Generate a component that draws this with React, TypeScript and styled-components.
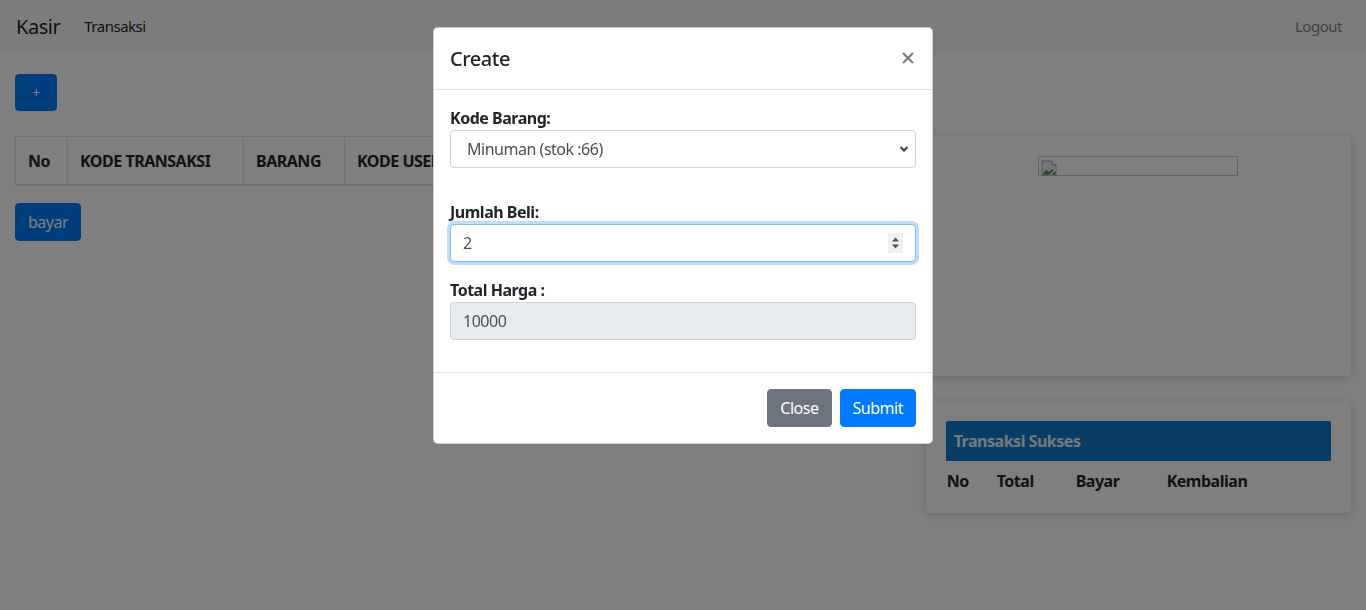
import React from 'react';
import styled, { createGlobalStyle } from 'styled-components';

const GlobalStyle = createGlobalStyle`
    * { box-sizing: border-box; }
    body {
        margin: 0;
        font-family: "Noto Sans", "Open Sans", sans-serif;
        font-size: 16px;
        line-height: 1.5;
        letter-spacing: -0.03em;
        color: #212529;
        background: #fff;
    }
    button, input, select { letter-spacing: inherit; }
`;

const Navbar = styled.nav`
    height: 53px;
    background: #f8f9fa;
    display: flex;
    align-items: center;
    padding: 0 16px;
`;

const Brand = styled.span`
    font-size: 20px;
    color: rgba(0, 0, 0, 0.9);
    margin-right: 16px;
`;

const NavLink = styled.a<{ $muted?: boolean }>`
    font-size: 15px;
    padding: 0 8px;
    text-decoration: none;
    color: ${p => (p.$muted ? 'rgba(0, 0, 0, 0.5)' : 'rgba(0, 0, 0, 0.9)')};
    margin-left: ${p => (p.$muted ? 'auto' : '0')};
`;

const Container = styled.main`
    padding: 21px 15px 0;
`;

const Button = styled.button<{ $variant?: 'primary' | 'secondary' }>`
    font-family: inherit;
    font-size: 16px;
    line-height: 24px;
    padding: 6px 12px;
    border: 1px solid transparent;
    border-radius: 4px;
    color: #fff;
    cursor: pointer;
    background: ${p => (p.$variant === 'secondary' ? '#6c757d' : '#007bff')};
    border-color: ${p => (p.$variant === 'secondary' ? '#6c757d' : '#007bff')};
`;

const AddButton = styled(Button)`
    width: 42px;
    height: 37px;
    font-size: 14px;
    padding: 0;
`;

const Row = styled.div`
    display: flex;
    margin: 25px -15px 0;
`;

const Col = styled.div<{ $size: number }>`
    flex: 0 0 ${p => (p.$size / 12) * 100}%;
    max-width: ${p => (p.$size / 12) * 100}%;
    padding: 0 15px;
`;

const Table = styled.table`
    width: 100%;
    border-collapse: collapse;
    margin-bottom: 17px;
`;

const Th = styled.th<{ $w?: number }>`
    width: ${p => (p.$w ? `${p.$w}px` : 'auto')};
    text-align: left;
    padding: 12px 12px 11px;
    border: 1px solid #dee2e6;
    border-bottom-width: 2px;
    white-space: nowrap;
    line-height: 24px;
`;

const Card = styled.div<{ $h?: number }>`
    background: #fff;
    border-radius: 5px;
    box-shadow: 0 2px 10px rgba(0, 0, 0, 0.18);
    padding: 20px;
    height: ${p => (p.$h ? `${p.$h}px` : 'auto')};
    margin-bottom: 25px;
`;

const ImageHolder = styled.div`
    display: flex;
    justify-content: center;
`;

const BrokenImage = styled.span`
    display: block;
    width: 200px;
    height: 20px;
    border: 1px solid #c8c8c8;
    padding: 1px 2px;
`;

const SuccessHead = styled.div`
    background: #0f7bcc;
    color: #eef2f6;
    font-weight: 700;
    padding: 8px 8px;
    border-radius: 2px 2px 0 0;
`;

const SuccessTable = styled.table`
    border-collapse: collapse;
    width: 100%;
`;

const SuccessTh = styled.th<{ $w?: number }>`
    width: ${p => (p.$w ? `${p.$w}px` : 'auto')};
    text-align: left;
    padding: 8px 1px 0;
    line-height: 24px;
`;

const Backdrop = styled.div`
    position: fixed;
    inset: 0;
    background: rgba(0, 0, 0, 0.5);
`;

const ModalWrap = styled.div`
    position: fixed;
    inset: 0;
    display: flex;
    justify-content: center;
    align-items: flex-start;
    padding-top: 27px;
`;

const Modal = styled.div`
    width: 500px;
    background: #fff;
    border: 1px solid rgba(0, 0, 0, 0.2);
    border-radius: 5px;
`;

const ModalHeader = styled.div`
    display: flex;
    align-items: center;
    justify-content: space-between;
    padding: 16px 16px 15px;
    border-bottom: 1px solid #dee2e6;
`;

const ModalTitle = styled.h5`
    margin: 0;
    font-size: 20px;
    font-weight: 500;
    line-height: 30px;
`;

const CloseX = styled.svg`
    opacity: 0.5;
    margin-right: 2px;
    margin-top: -2px;
`;

const ModalBody = styled.div`
    padding: 16px 16px 0;
`;

const Group = styled.div<{ $gap: number }>`
    margin-bottom: ${p => p.$gap}px;
`;

const Label = styled.label`
    display: block;
    font-weight: 700;
    line-height: 24px;
`;

const Field = styled.div`
    position: relative;
`;

const Control = styled.input<{ $focus?: boolean }>`
    display: block;
    width: 100%;
    height: 38px;
    padding: 6px 12px;
    font-family: inherit;
    font-size: 16px;
    color: #495057;
    background: #fff;
    border: 1px solid ${p => (p.$focus ? '#80bdff' : '#ced4da')};
    border-radius: 4px;
    box-shadow: ${p => (p.$focus ? '0 0 0 3px rgba(0, 123, 255, 0.25)' : 'none')};
    outline: none;
    caret-color: #212529;

    &:read-only:not([data-edit]) {
        background: #e9ecef;
    }
`;

const Select = styled.select`
    display: block;
    width: 100%;
    height: 38px;
    padding: 6px 12px 6px 16px;
    font-family: inherit;
    font-size: 16px;
    color: #495057;
    background: #fff;
    border: 1px solid #ced4da;
    border-radius: 4px;
    appearance: none;
    outline: none;
`;

const Chevron = styled.svg`
    position: absolute;
    right: 6px;
    top: 14px;
    pointer-events: none;
`;

const Spinner = styled.svg`
    position: absolute;
    right: 13px;
    top: 9px;
    pointer-events: none;
`;

const ModalFooter = styled.div`
    display: flex;
    justify-content: flex-end;
    gap: 8px;
    padding: 16px;
    border-top: 1px solid #dee2e6;
`;

export default function App() {
    return (
        <>
            <GlobalStyle />
            <Navbar>
                <Brand>Kasir</Brand>
                <NavLink href="#">Transaksi</NavLink>
                <NavLink href="#" $muted>Logout</NavLink>
            </Navbar>
            <Container>
                <AddButton>+</AddButton>
                <Row>
                    <Col $size={8}>
                        <Table>
                            <thead>
                                <tr>
                                    <Th $w={52}>No</Th>
                                    <Th $w={176}>KODE TRANSAKSI</Th>
                                    <Th $w={101}>BARANG</Th>
                                    <Th>KODE USER</Th>
                                    <Th>JUMLAH</Th>
                                    <Th>TOTAL HARGA</Th>
                                </tr>
                            </thead>
                        </Table>
                        <Button>bayar</Button>
                    </Col>
                    <Col $size={4}>
                        <Card $h={240}>
                            <ImageHolder>
                                <BrokenImage>
                                    <svg width="16" height="16" viewBox="0 0 16 16">
                                        <path d="M1 1h10l4 4v10H1z" fill="#e8eef4" stroke="#9aa4ae" />
                                        <path d="M11 1v4h4" fill="#fff" stroke="#9aa4ae" />
                                        <path d="M1.5 14.5 L5 10 L8 12 L11 9 L14.5 12 V14.5z" fill="#4a9a3a" />
                                        <path d="M9 15 L15 9" stroke="#fff" strokeWidth="1.5" />
                                    </svg>
                                </BrokenImage>
                            </ImageHolder>
                        </Card>
                        <Card>
                            <SuccessHead>Transaksi Sukses</SuccessHead>
                            <SuccessTable>
                                <thead>
                                    <tr>
                                        <SuccessTh $w={50}>No</SuccessTh>
                                        <SuccessTh $w={79}>Total</SuccessTh>
                                        <SuccessTh $w={91}>Bayar</SuccessTh>
                                        <SuccessTh>Kembalian</SuccessTh>
                                    </tr>
                                </thead>
                            </SuccessTable>
                        </Card>
                    </Col>
                </Row>
            </Container>

            <Backdrop />
            <ModalWrap>
                <Modal>
                    <ModalHeader>
                        <ModalTitle>Create</ModalTitle>
                        <CloseX width="12" height="12" viewBox="0 0 12 12">
                            <path d="M1 1 L11 11 M11 1 L1 11" stroke="#000" strokeWidth="2.2" />
                        </CloseX>
                    </ModalHeader>
                    <ModalBody>
                        <Group $gap={32}>
                            <Label>Kode Barang:</Label>
                            <Field>
                                <Select defaultValue="minuman">
                                    <option value="minuman">Minuman (stok :66)</option>
                                </Select>
                                <Chevron width="12" height="10" viewBox="0 0 12 10">
                                    <path d="M2.5 3 L6 6.5 L9.5 3" fill="none" stroke="#343a40" strokeWidth="2" />
                                </Chevron>
                            </Field>
                        </Group>
                        <Group $gap={16}>
                            <Label>Jumlah Beli:</Label>
                            <Field>
                                <Control $focus data-edit defaultValue="2" autoFocus />
                                <Spinner width="15" height="20" viewBox="0 0 15 20">
                                    <rect width="15" height="20" fill="#efefef" />
                                    <path d="M4 8.5 L7.5 4.5 L11 8.5z" fill="#505050" />
                                    <path d="M4 11.5 L7.5 15.5 L11 11.5z" fill="#505050" />
                                </Spinner>
                            </Field>
                        </Group>
                        <Group $gap={32}>
                            <Label>Total Harga :</Label>
                            <Control readOnly value="10000" />
                        </Group>
                    </ModalBody>
                    <ModalFooter>
                        <Button $variant="secondary">Close</Button>
                        <Button>Submit</Button>
                    </ModalFooter>
                </Modal>
            </ModalWrap>
        </>
    );
}
